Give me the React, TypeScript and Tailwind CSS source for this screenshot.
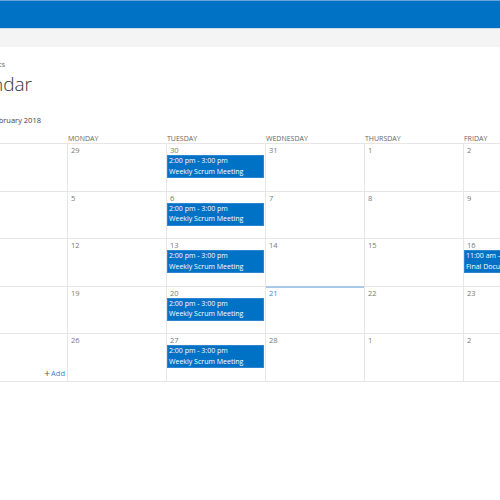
import React from "react";

type Ev = { time: string; title: string };
type Cell = { n: number; ev?: Ev; today?: boolean; add?: boolean };

const scrum: Ev = { time: "2:00 pm - 3:00 pm", title: "Weekly Scrum Meeting" };
const review: Ev = { time: "11:00 am – 12:00 pm", title: "Final Document Review" };

const weeks: Cell[][] = [
  [{ n: 28 }, { n: 29 }, { n: 30, ev: scrum }, { n: 31 }, { n: 1 }, { n: 2 }, { n: 3 }],
  [{ n: 4 }, { n: 5 }, { n: 6, ev: scrum }, { n: 7 }, { n: 8 }, { n: 9 }, { n: 10 }],
  [{ n: 11 }, { n: 12 }, { n: 13, ev: scrum }, { n: 14 }, { n: 15 }, { n: 16, ev: review }, { n: 17 }],
  [{ n: 18 }, { n: 19 }, { n: 20, ev: scrum }, { n: 21, today: true }, { n: 22 }, { n: 23 }, { n: 24 }],
  [{ n: 25, add: true }, { n: 26 }, { n: 27, ev: scrum }, { n: 28 }, { n: 1 }, { n: 2 }, { n: 3 }],
];

const days = ["Sunday", "Monday", "Tuesday", "Wednesday", "Thursday", "Friday", "Saturday"];

export default function App() {
  return (
    <div className="w-[500px] h-[500px] overflow-hidden bg-white font-['Open_Sans','Noto_Sans',sans-serif] text-[#333]">
      <div className="h-[1px] bg-[#6aa6dc]" />
      <div className="h-[27px] bg-[#0072c6]" />
      <div className="h-[1px] bg-[#cfdbe7]" />
      <div className="h-[18px] bg-[#f4f4f4]" />

      <div className="mt-[13px] w-[5px] flex justify-end whitespace-nowrap text-[7px] leading-[10px] text-[#666]">
        Site contents&nbsp;&nbsp;Team Topics
      </div>
      <div className="mt-[2px] w-[32px] flex justify-end whitespace-nowrap text-[19px] leading-[24px] font-light text-[#333]">
        Calendar
      </div>
      <div className="mt-[19px] w-[41px] flex justify-end whitespace-nowrap text-[7.5px] leading-[10px] text-[#444]">
        February 2018
      </div>

      <div className="mt-[9px] ml-[-32px] w-[693px]">
        <div className="grid grid-cols-[repeat(7,99px)] h-[9px]">
          {days.map((d) => (
            <div key={d} className="pl-[1px] text-[7px] leading-[9px] uppercase text-[#666]">
              {d}
            </div>
          ))}
        </div>
        <div className="border-t border-[#e6e6e6]">
          {weeks.map((w, wi) => (
            <div key={wi} className="grid grid-cols-[repeat(7,99px)] h-[47.5px]">
              {w.map((c, ci) => (
                <div
                  key={ci}
                  className="relative flex flex-col border-l border-b border-[#e6e6e6] pt-[1px]"
                >
                  {c.today && <div className="absolute left-0 right-0 top-[-1px] h-[2px] bg-[#a9c9e8]" />}
                  <div
                    className={
                      "pl-[3px] text-[7.5px] leading-[10px] " +
                      (c.today ? "text-[#2b88d8]" : "text-[#777]")
                    }
                  >
                    {c.n}
                  </div>
                  {c.ev && (
                    <div className="mr-[1px] border border-[#2f86d0] bg-[#0072c6] pl-[1px] text-white text-[7px] leading-[10.5px] whitespace-nowrap overflow-hidden">
                      <div>{c.ev.time}</div>
                      <div>{c.ev.title}</div>
                    </div>
                  )}
                  {c.add && (
                    <div className="mt-auto mb-[3px] pr-[2px] flex items-center justify-end gap-[1px] text-[7.5px] leading-[10px]">
                      <span className="text-[#555] text-[10px] leading-[10px]">+</span>
                      <span className="text-[#2b88d8]">Add</span>
                    </div>
                  )}
                </div>
              ))}
            </div>
          ))}
        </div>
      </div>
    </div>
  );
}
